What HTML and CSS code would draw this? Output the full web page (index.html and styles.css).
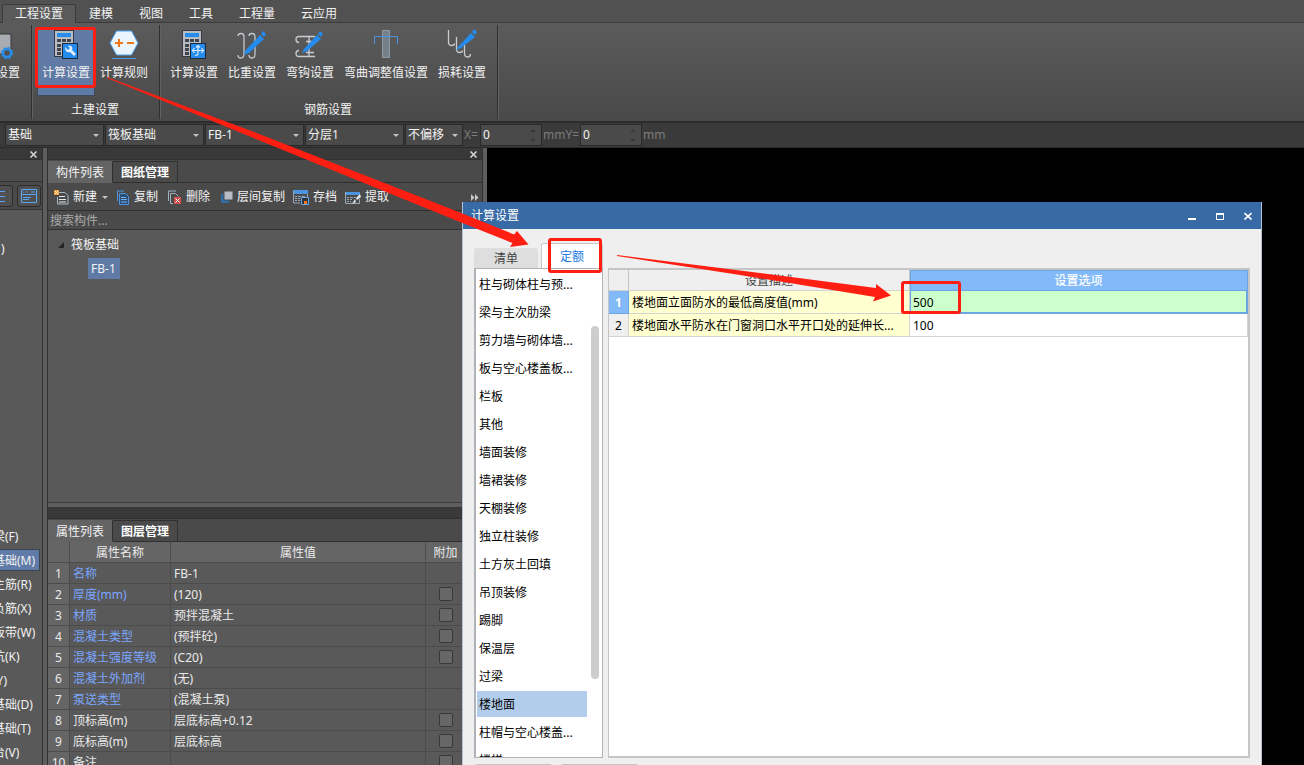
FILE: index.html
```html
<!DOCTYPE html>
<html lang="zh-CN">
<head>
<meta charset="utf-8">
<title>计算设置</title>
<link rel="stylesheet" href="styles.css">
</head>
<body>
<div class="app">
  <nav class="menu">
    <button class="menu-tab active">工程设置</button>
    <button class="menu-tab">建模</button>
    <button class="menu-tab">视图</button>
    <button class="menu-tab">工具</button>
    <button class="menu-tab">工程量</button>
    <button class="menu-tab">云应用</button>
  </nav>

  <section class="ribbon">
    <div class="group clipped">
      <div class="group-buttons">
        <button class="tool">
          <svg width="38" height="32" viewBox="0 0 38 32"><path d="M8 5h13v20H8z" fill="#a9abb0" stroke="#33363b"/><circle cx="17" cy="24" r="4" fill="#4f4f4f" stroke="#2a8de8" stroke-width="2.400"/><circle cx="17" cy="24" r="5.500" fill="none" stroke="#2a8de8" stroke-width="1.500" stroke-dasharray="2.160 2.160"/></svg>
          <span>设置</span>
        </button>
      </div>
    </div>
    <div class="group">
      <div class="group-buttons">
        <button class="tool selected">
          <svg width="38" height="32" viewBox="0 0 38 32"><rect x="7.500" y="1.500" width="19" height="26" fill="#b9bcc2" stroke="#353a42"/><path d="M10 4h14v4H10z" fill="#238cee"/><path d="M10 10h4v3h-4zm5 0h4v3h-4zm5 0h4v3h-4zM10 15h4v3h-4zM10 19h4v3h-4zM10 23h4v3h-4z" fill="#41464d"/><rect x="15.500" y="14.500" width="15" height="15" fill="#238cee" stroke="#1d2a3b"/><path d="M18 18l3 3 2-2-2-2c4-1 5 2 4 4l4 4-2 2-4-4c-3 1-5-1-5-5z" fill="#e3efff"/></svg>
          <span>计算设置</span>
        </button>
        <button class="tool">
          <svg width="38" height="32" viewBox="0 0 38 32"><path d="M5 14L11.500 2h15L33 14l-6.500 12h-15z" fill="#eaf4ff" stroke="#4fa0f0"/><path d="M10 14h8M14 10v8M22 14h7" stroke="#f07818" stroke-width="2"/><path d="M7 29.500h24" stroke="#4f9ae8"/></svg>
          <span>计算规则</span>
        </button>
      </div>
      <div class="group-name">土建设置</div>
    </div>
    <div class="group">
      <div class="group-buttons">
        <button class="tool">
          <svg width="38" height="32" viewBox="0 0 38 32"><rect x="7.500" y="1.500" width="19" height="26" fill="#b9bcc2" stroke="#353a42"/><path d="M10 4h14v4H10z" fill="#238cee"/><path d="M10 10h4v3h-4zm5 0h4v3h-4zm5 0h4v3h-4zM10 15h4v3h-4zM10 19h4v3h-4zM10 23h4v3h-4z" fill="#41464d"/><rect x="15.500" y="14.500" width="15" height="15" fill="#238cee" stroke="#1d2a3b"/><path d="M18 21.500h10M23 17v8q-1 2-3 1M21 18.500l2-2 2 2M19.500 19l-2 2.500 2 2.500M26.500 19l2 2.500-2 2.500" stroke="#dbeafe" stroke-width="1.200" fill="none"/></svg>
          <span>计算设置</span>
        </button>
        <button class="tool">
          <svg width="38" height="32" viewBox="0 0 38 32"><path d="M5 7q0-2.500 3-2.500T11 8v17q0 4-3 4t-3-3M16 7q0-2.500 3-2.500T22 8v17q0 4-3 4t-3-3" fill="none" stroke="#c3c7cd" stroke-width="1.300"/><path d="M12 22L27 6l4 4-15 14-5 2z" fill="#238cee"/><path d="M28 5l2-3 3 3-2 3z" fill="#238cee"/></svg>
          <span>比重设置</span>
        </button>
        <button class="tool">
          <svg width="38" height="32" viewBox="0 0 38 32"><path d="M24 7.500H8q-3 0-3 3t3 3M24 27.500H8q-3 0-3-3t3-3M18 7v20M15 12.500h6M15 23.500h8" fill="none" stroke="#c9cdd2" stroke-width="1.300"/><path d="M13 20L26 6l4 4-14 12-5 2z" fill="#238cee"/><path d="M27 5l2-3 3 3-2 3z" fill="#238cee"/></svg>
          <span>弯钩设置</span>
        </button>
        <button class="tool">
          <svg width="38" height="32" viewBox="0 0 38 32"><rect x="15.500" y="1.500" width="7" height="27" fill="#74818b" stroke="#8e9ba4"/><path d="M7.500 15V7.500h23V15" fill="none" stroke="#4a90dc"/></svg>
          <span>弯曲调整值设置</span>
        </button>
        <button class="tool">
          <svg width="38" height="32" viewBox="0 0 38 32"><path d="M5.500 1v12q0 3.500 3 3.500t3-2M13.500 8v12q0 3.500 3 3.500t3-2M21.500 15v9q0 4 3 4t3-3" fill="none" stroke="#c9cdd2" stroke-width="1.300"/><path d="M15 18L28 4l4 4-14 11-5 2z" fill="#238cee"/><path d="M29 3l2-3 3 3-2 3z" fill="#238cee"/></svg>
          <span>损耗设置</span>
        </button>
      </div>
      <div class="group-name">钢筋设置</div>
    </div>
  </section>

  <section class="options">
    <label class="combo"><select aria-label="构件大类"><option>基础</option></select></label>
    <label class="combo"><select aria-label="构件类型"><option>筏板基础</option></select></label>
    <label class="combo"><select aria-label="构件"><option>FB-1</option></select></label>
    <label class="combo"><select aria-label="分层"><option>分层1</option></select></label>
    <label class="combo narrow"><select aria-label="偏移"><option>不偏移</option></select></label>
    <label class="unit x" for="off-x">X=</label>
    <span class="spin"><input id="off-x" type="text" value="0"></span>
    <label class="unit y" for="off-y">mmY=</label>
    <span class="spin"><input id="off-y" type="text" value="0"></span>
    <span class="unit">mm</span>
  </section>

  <main class="work">
    <aside class="nav-panel">
      <div class="strip"><button class="close" aria-label="关闭"><svg width="7" height="7" viewBox="0 0 7 7"><path d="M.5.5l6 6M6.500.5l-6 6" stroke="#d8d8d8" stroke-width="1.500"/></svg></button></div>
      <div class="nav-space"></div>
      <div class="nav-tools">
        <button class="view" aria-label="列表"><svg width="16" height="14" viewBox="0 0 16 14"><path d="M0 2.500h12M0 7.500h12M0 12.500h12" stroke="#58a5f5"/></svg></button>
        <button class="view" aria-label="窗口"><svg width="16" height="14" viewBox="0 0 16 14"><path d="M.5.5h15v13H.5zM1 5.500h14M2 8.500h8M2 10.500h6" fill="none" stroke="#58a5f5"/><path d="M2 3h1m1 0h1m1 0h1m3 0h4" stroke="#58a5f5"/></svg></button>
      </div>
      <div class="nav-top">)</div>
      <ul class="nav-list">
        <li>梁(F)</li>
        <li class="current">基础(M)</li>
        <li>主筋(R)</li>
        <li>负筋(X)</li>
        <li>板带(W)</li>
        <li>坑(K)</li>
        <li>(Y)</li>
        <li>基础(D)</li>
        <li>基础(T)</li>
        <li>台(V)</li>
      </ul>
    </aside>

    <section class="middle">
      <div class="strip"><button class="close" aria-label="关闭"><svg width="7" height="7" viewBox="0 0 7 7"><path d="M.5.5l6 6M6.500.5l-6 6" stroke="#d8d8d8" stroke-width="1.500"/></svg></button></div>
      <div class="tabs"><button class="tab on">构件列表</button><button class="tab">图纸管理</button></div>
      <div class="toolbar">
        <button class="act new"><svg width="15" height="15" viewBox="0 0 15 15"><path d="M5 2.500h6l3 3v8.500H3.500V7" fill="none" stroke="#a9b8c3"/><path d="M5 6.500h6M5 9.500h7M5 12h7" stroke="#e8e8e8"/><path d="M0 0h5v5H0z" fill="#f5a03c"/><path d="M1 1h1v1H1zm2 0h1v1H3zM2 2h1v1H2zM1 3h1v1H1zm2 0h1v1H3z" fill="#fff2c8"/></svg>新建<i class="down"></i></button>
        <button class="act copy"><svg width="13" height="15" viewBox="0 0 13 15"><path d="M1.500 11V1H8" fill="none" stroke="#4b95e0"/><path d="M3.500 3.500h6l3 3v8h-9z" fill="#2d4e72" stroke="#4b95e0"/><path d="M5 7.500h5M5 9.500h6M5 12h6" stroke="#6db0f5"/></svg>复制</button>
        <button class="act del"><svg width="14" height="15" viewBox="0 0 14 15"><path d="M1.500 11V1H9M3.500 13.500v-10h5l3 3M3.500 13.500H6" fill="none" stroke="#9fb1bd"/><path d="M7 7h7v7H7z" fill="#d44b4b"/><path d="M8.500 8.500l4 4m0-4l-4 4" stroke="#fff"/></svg>删除</button>
        <button class="act floor"><svg width="13" height="15" viewBox="0 0 13 15"><path d="M1 4h8v9H1z" fill="#2f6da3"/><path d="M4 1h9v9H4z" fill="#b9bdc8" stroke="#4a4a4a"/></svg>层间复制</button>
        <button class="act save"><svg width="16" height="15" viewBox="0 0 16 15"><path d="M0 0h15v4H0z" fill="#4b95e0"/><path d="M.5 1v12H7M14.500 4v3M2 6.500h2m1 0h3m1 0h3M2 8.500h2m1 0h2M2 10.500h2m1 0h2" fill="none" stroke="#9aa9b5"/><path d="M8.500 7.500h7v7h-7z" fill="#333" stroke="#5fa8f2"/><path d="M11 11h3v3h-3z" fill="#f17b26"/></svg>存档</button>
        <button class="act pick"><svg width="16" height="15" viewBox="0 0 16 15"><path d="M0 2h15v3H0z" fill="#4b95e0"/><path d="M.5 2v11.500h14V9M2 7.500h2m1 0h3M2 9.500h2m1 0h2M2 11.500h2m1 0h1M9 7.500h2" fill="none" stroke="#9aa9b5"/><path d="M15 4l-4 4 1 2 4-3zM10 9l-3 5 4-2z" fill="#e4e7ea"/></svg>提取</button>
        <button class="more" aria-label="更多"><svg width="8" height="7" viewBox="0 0 8 7"><path d="M0 0l3.500 3.500L0 7zM4 0l3.500 3.500L4 7z" fill="#c8c8c8"/></svg></button>
      </div>
      <input class="search" type="text" placeholder="搜索构件..." aria-label="搜索构件">
      <div class="tree">
        <div class="node"><svg width="6" height="6" viewBox="0 0 6 6"><path d="M6 0v6H0z" fill="#262626"/></svg>筏板基础</div>
        <button class="leaf">FB-1</button>
      </div>
      <div class="gap"></div>
      <div class="strip"></div>
      <div class="tabs"><button class="tab on">属性列表</button><button class="tab">图层管理</button></div>
      <div class="props-box">
      <table class="props">
        <colgroup><col class="c-no"><col class="c-name"><col class="c-value"><col class="c-add"><col></colgroup>
        <thead><tr><th></th><th>属性名称</th><th>属性值</th><th>附加</th><th></th></tr></thead>
        <tbody>
          <tr><td>1</td><td class="blue">名称</td><td>FB-1</td><td></td><td></td></tr>
          <tr><td>2</td><td class="blue">厚度(mm)</td><td>(120)</td><td><input type="checkbox" aria-label="附加 厚度"></td><td></td></tr>
          <tr><td>3</td><td class="blue">材质</td><td>预拌混凝土</td><td><input type="checkbox" aria-label="附加 材质"></td><td></td></tr>
          <tr><td>4</td><td class="blue">混凝土类型</td><td>(预拌砼)</td><td><input type="checkbox" aria-label="附加 混凝土类型"></td><td></td></tr>
          <tr><td>5</td><td class="blue">混凝土强度等级</td><td>(C20)</td><td><input type="checkbox" aria-label="附加 混凝土强度等级"></td><td></td></tr>
          <tr><td>6</td><td class="blue">混凝土外加剂</td><td>(无)</td><td></td><td></td></tr>
          <tr><td>7</td><td class="blue">泵送类型</td><td>(混凝土泵)</td><td></td><td></td></tr>
          <tr><td>8</td><td>顶标高(m)</td><td>层底标高+0.12</td><td><input type="checkbox" aria-label="附加 顶标高"></td><td></td></tr>
          <tr><td>9</td><td>底标高(m)</td><td>层底标高</td><td><input type="checkbox" aria-label="附加 底标高"></td><td></td></tr>
          <tr><td>10</td><td>备注</td><td></td><td><input type="checkbox" aria-label="附加 备注"></td><td></td></tr>
        </tbody>
      </table>
      </div>
    </section>
    <div class="canvas"></div>
  </main>

  <section class="dialog" role="dialog" aria-label="计算设置">
    <header class="dialog-title">
      <span>计算设置</span>
      <button aria-label="最小化"><svg width="8" height="8" viewBox="0 0 8 8"><path d="M0 6h8v2H0z" fill="#fff"/></svg></button>
      <button aria-label="最大化"><svg width="8" height="8" viewBox="0 0 8 8"><path d="M0 1h8v7H0zM1 3v4h6V3z" fill="#fff" fill-rule="evenodd"/></svg></button>
      <button aria-label="关闭"><svg width="8" height="8" viewBox="0 0 8 8"><path d="M.5 1l7 6.500M7.500 1l-7 6.500" stroke="#fff" stroke-width="1.600"/></svg></button>
    </header>
    <div class="dialog-tabs"><button class="dtab">清单</button><button class="dtab on">定额</button></div>
    <div class="dialog-body">
      <div class="kinds">
        <ul>
          <li>柱与砌体柱与预...</li>
          <li>梁与主次肋梁</li>
          <li>剪力墙与砌体墙...</li>
          <li>板与空心楼盖板...</li>
          <li>栏板</li>
          <li>其他</li>
          <li>墙面装修</li>
          <li>墙裙装修</li>
          <li>天棚装修</li>
          <li>独立柱装修</li>
          <li>土方灰土回填</li>
          <li>吊顶装修</li>
          <li>踢脚</li>
          <li>保温层</li>
          <li>过梁</li>
          <li class="current">楼地面</li>
          <li>柱帽与空心楼盖...</li>
          <li>楼梯</li>
        </ul>
        <div class="track"><div class="thumb"></div></div>
      </div>
      <div class="settings-box">
        <table class="settings">
          <colgroup><col class="s-no"><col class="s-desc"><col></colgroup>
          <thead><tr><th></th><th>设置描述</th><th class="hot">设置选项</th></tr></thead>
          <tbody>
            <tr><td class="no hot">1</td><td class="desc">楼地面立面防水的最低高度值(mm)</td><td class="editing">500</td></tr>
            <tr><td class="no">2</td><td class="desc">楼地面水平防水在门窗洞口水平开口处的延伸长...</td><td>100</td></tr>
          </tbody>
        </table>
      </div>
    </div>
    <footer class="dialog-foot"><span></span><span></span></footer>
  </section>

  <svg class="marks" width="1304" height="765" viewBox="0 0 1304 765">
    <g fill="none" stroke="#ff1f12" stroke-width="3">
      <rect x="36.500" y="28.500" width="58" height="58" rx="1.500"/>
      <rect x="549.500" y="239.500" width="51" height="32" rx="1.500"/>
      <rect x="902.500" y="282.500" width="57" height="30" rx="1.500"/>
    </g>
    <g fill="#ff1f12">
      <path d="M107 77L250 130.500 460 212.500 514 234.500 517 231 528.500 244.500 510 247 512.500 243 460 222 250 136.500 107 78z"/>
      <path d="M617 255L740 270.500 876 288 876 284 891 295.500 873 301.500 875 297 740 275 617 256z"/>
    </g>
  </svg>
</div>
</body>
</html>
```
FILE: styles.css
```css
* { box-sizing: border-box; }
body {
  margin: 0;
  font-family: "Noto Sans", "Noto Sans CJK SC", sans-serif;
  font-size: 12px;
  line-height: 16px;
  color: #f2f2f2;
  background: #000;
}
button, input, select {
  font: inherit;
  color: inherit;
  background: none;
  border: 0;
  padding: 0;
  margin: 0;
}
svg { display: block; flex: none; }
ul { list-style: none; margin: 0; padding: 0; }
.app {
  position: relative;
  display: flex;
  flex-direction: column;
  height: 100vh;
  overflow: hidden;
}

/* ribbon */
.menu {
  display: flex;
  align-items: flex-end;
  flex: none;
  height: 23px;
  padding-left: 2px;
  background: #515151;
  border-bottom: 1px solid #3c3c3c;
}
.menu-tab { height: 19px; padding: 2px 13px 0; line-height: 18px; white-space: nowrap; }
.menu-tab.active {
  margin-bottom: -1px;
  padding: 0 12px;
  background: #5a5a5a;
  border: 1px solid #3a3a3a;
  border-bottom: 0;
  border-radius: 2px 2px 0 0;
}
.ribbon {
  display: flex;
  flex: none;
  height: 98px;
  padding: 2px 0;
  background: linear-gradient(#5b5b5b, #494949);
}
.group {
  display: flex;
  flex-direction: column;
  padding: 3px 6px 0 5px;
  border-right: 1px solid #303030;
  box-shadow: 1px 0 #616161;
}
.clipped { width: 32px; padding: 3px 11px 0 0; align-items: flex-end; }
.group-buttons { display: flex; }
.group-name { margin-top: 6px; text-align: center; }
.tool {
  display: flex;
  flex-direction: column;
  align-items: center;
  height: 68px;
  padding: 1px 5px 0;
  white-space: nowrap;
}
.tool svg { margin-bottom: 4px; }
.clipped .tool { align-items: flex-end; padding: 1px 0 0; }
.clipped .tool svg { margin-right: -8px; }
.selected { background: #607aa6; box-shadow: inset 0 0 0 1px #404957; }

/* option bar */
.options {
  display: flex;
  align-items: center;
  flex: none;
  gap: 1px;
  height: 27px;
  padding: 0 5px 1px;
  background: #3a3a3a;
  border-top: 2px solid #2c2c2c;
  border-bottom: 1px solid #2b2b2b;
}
.combo, .spin {
  position: relative;
  display: block;
  width: 99px;
  height: 22px;
  background: #4a4a4a;
  border: 1px solid #292929;
}
.combo select { appearance: none; width: 100%; height: 20px; padding-left: 2px; outline: 0; }
.combo::after, .down {
  border: 3px solid transparent;
  border-top-color: #c4c4c4;
  border-bottom: 0;
}
.combo::after { content: ""; position: absolute; right: 4px; top: 9px; pointer-events: none; }
.combo.narrow { width: 58px; }
.unit { color: #7c7c7c; }
.unit.x { width: 15px; }
.unit.y { width: 36px; }
.spin { width: 62px; }
.spin input { width: 48px; height: 20px; padding-left: 2px; outline: 0; }
.spin::before, .spin::after {
  content: "";
  position: absolute;
  right: 5px;
  border: 3px solid transparent;
}
.spin::before { top: 4px; border-top: 0; border-bottom-color: #393939; }
.spin::after { bottom: 3px; border-bottom: 0; border-top-color: #393939; }

/* work area */
.work {
  display: grid;
  grid-template-columns: 43px 436px 1fr;
  column-gap: 4px;
  flex: 1;
  min-height: 0;
  background: #5e5e5e;
}
.canvas { background: #000; }
.nav-panel, .middle {
  display: flex;
  flex-direction: column;
  min-width: 0;
  min-height: 0;
  overflow: hidden;
  background: #595959;
  border-right: 1px solid #303030;
}
.strip {
  display: flex;
  justify-content: flex-end;
  align-items: center;
  flex: none;
  height: 12px;
  padding: 1px 5px 0 0;
  background: #393939;
  border-bottom: 1px solid #303030;
}
.nav-space { flex: none; height: 22px; background: #4c4c4c; border-bottom: 1px solid #333; }
.nav-tools {
  display: flex;
  justify-content: flex-end;
  align-items: center;
  flex: none;
  gap: 4px;
  height: 28px;
  padding-right: 1px;
  background: #4a4a4a;
  border-bottom: 1px solid #333;
}
.view {
  display: grid;
  place-items: center;
  flex: none;
  width: 24px;
  height: 22px;
  background: #505050;
  border: 1px solid #2c2c2c;
  border-radius: 3px;
}
.nav-top { flex: none; height: 314px; padding: 31px 0 0 1px; }
.nav-list li {
  display: flex;
  align-items: center;
  height: 24px;
  padding-top: 2px;
  text-indent: -7px;
  white-space: nowrap;
}
.nav-list .current {
  height: 20px;
  margin: 2px 3px 2px 0;
  background: #607ba8;
  box-shadow: 0 0 0 1px #3d434c;
}

/* component and property panels */
.middle { border-left: 1px solid #303030; }
.tabs {
  display: flex;
  flex: none;
  height: 23px;
  background: #4a4a4a;
  border-bottom: 1px solid #303030;
}
.tab {
  width: 65px;
  height: 22px;
  margin-top: 1px;
  padding-top: 1px;
  border: 1px solid #303030;
  border-left: 0;
  white-space: nowrap;
}
.tab:not(.on) { color: #fff; font-weight: 700; }
.tab.on { background: #636363; border-color: #636363; border-right-color: #303030; }
.toolbar {
  display: flex;
  align-items: center;
  flex: none;
  height: 28px;
  padding: 1px 0 0 6px;
  background: #4a4a4a;
  border-bottom: 1px solid #303030;
}
.act { display: flex; align-items: center; gap: 4px; margin-right: 10px; white-space: nowrap; }
.new { margin-right: 8px; }
.new .down { margin-left: 1px; }
.copy { gap: 5px; margin-right: 9px; }
.del { gap: 5px; }
.floor { margin-right: 8px; }
.save { margin-right: 8px; }
.more { margin: 0 3px 0 auto; }
.search {
  flex: none;
  height: 19px;
  padding: 1px 2px 0;
  background: #4a4a4a;
  border-bottom: 1px solid #333;
  outline: 0;
}
.search::placeholder { color: #aaa; opacity: 1; }
.tree { flex: none; height: 273px; padding: 4px 0 0 10px; border-bottom: 1px solid #3c3c3c; }
.node { display: flex; align-items: center; gap: 7px; height: 22px; }
.leaf { display: block; height: 21px; margin: 2px 0 0 30px; padding: 0 4px 0 3px; background: #607aa6; }
.gap { flex: none; height: 4px; background: #5e5e5e; }
.props-box { flex: 1; min-height: 0; overflow: hidden; }
.props, .settings { width: 100%; table-layout: fixed; border-spacing: 0; }
.c-no { width: 22px; }
.c-name { width: 101px; }
.c-value { width: 255px; }
.c-add { width: 40px; }
.props th, .props td {
  height: 21px;
  padding: 2px 3px 0;
  border-right: 1px solid #4c4c4c;
  border-bottom: 1px solid #4c4c4c;
  font-weight: 400;
  line-height: 18px;
  color: #ebebeb;
  white-space: nowrap;
}
.props th, .props td:first-child { background: #656565; }
.props td:first-child { padding: 2px 0 0; text-align: center; }
.props td:nth-child(4) { padding-top: 0; }
.props .blue { color: #7ba6ff; }
.props input {
  appearance: none;
  display: block;
  width: 14px;
  height: 14px;
  margin: 0 auto;
  background: #676767;
  border: 1px solid #383838;
  border-radius: 2px;
}

/* dialog window */
.dialog {
  position: absolute;
  left: 462px;
  right: 42px;
  top: 202px;
  bottom: 0;
  display: flex;
  flex-direction: column;
  overflow: hidden;
  color: #000;
  background: #efefef;
  border: 1px solid #b9c2d3;
  border-width: 0 1px;
}
.dialog-title {
  display: flex;
  align-items: center;
  flex: none;
  gap: 20px;
  height: 27px;
  margin: 0 -1px;
  padding: 0 10px 0 9px;
  color: #fff;
  background: #386aa5;
}
.dialog-title span { flex: 1; }
.dialog-tabs {
  display: flex;
  align-items: flex-end;
  flex: none;
  gap: 3px;
  height: 39px;
  padding-left: 11px;
}
.dtab {
  width: 64px;
  height: 20px;
  padding-top: 2px;
  color: #444;
  background: #dedede;
  border-radius: 3px 3px 0 0;
}
.dtab.on {
  width: 62px;
  height: 25px;
  color: #2079df;
  background: #fff;
  border: 1px solid #c5c7cb;
  border-bottom: 0;
}
.dialog-body { display: flex; flex: 1; gap: 5px; min-height: 0; padding: 0 11px; }
.kinds {
  display: flex;
  flex: none;
  width: 129px;
  overflow: hidden;
  background: #fff;
  border: 1px solid #afb2b8;
  border-left-width: 2px;
}
.kinds ul { width: 111px; margin-top: 1px; }
.kinds li {
  height: 26px;
  margin: 1px 0 2px 1px;
  padding-left: 2px;
  line-height: 28px;
  white-space: nowrap;
}
.kinds .current { background: #b2ccec; }
.track { flex: 1; padding: 57px 3px 78px 4px; }
.thumb { width: 8px; height: 100%; background: #cdcdcd; border-radius: 4px; }
.settings-box {
  flex: 1;
  min-width: 0;
  background: #fff;
  border: 2px solid #c5c5c5;
  border-left-width: 1px;
}
.s-no { width: 20px; }
.s-desc { width: 281px; }
.settings th, .settings td {
  height: 23px;
  padding: 2px 3px 0;
  border-right: 1px solid #d3d3d3;
  border-bottom: 1px solid #d3d3d3;
  line-height: 18px;
  white-space: nowrap;
  overflow: hidden;
}
.settings th { height: 21px; color: #444; font-weight: 400; background: #efefef; border-right-color: #c5c5c5; }
.settings .no { padding: 2px 0 0; text-align: center; background: #efefef; }
.settings .desc { background: #ffffcf; }
.settings .hot { color: #fff; background: #82b9f9; border-color: #6aa5e4; font-weight: 500; }
.settings td.hot { font-weight: 700; }
.settings th.hot { box-shadow: inset 1px 1px #6aa5e4; }
.settings td.editing { background: #cfc; box-shadow: inset 1px 0 #6aa5e4, inset -1px -1px #6aa5e4; border-color: #6aa5e4; }
.dialog-foot { display: flex; flex: none; gap: 9px; height: 7px; padding: 6px 12px 0; overflow: hidden; }
.dialog-foot span { width: 77px; height: 20px; background: #c4c4c4; border-radius: 2px; }

/* annotations */
.marks { position: absolute; left: 0; top: 0; pointer-events: none; }
```
